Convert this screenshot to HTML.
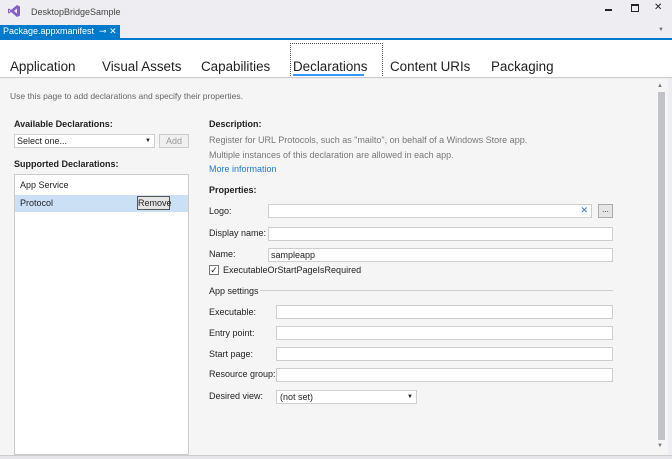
<!DOCTYPE html>
<html><head><style>
*{margin:0;padding:0;box-sizing:border-box}
body{width:672px;height:459px;overflow:hidden;background:#eeeef2;font-family:"Segoe UI","Liberation Sans",sans-serif;font-size:9px;color:#1e1e1e;position:relative}
.a{position:absolute;white-space:nowrap}
.in{position:absolute;background:#fff;border:1px solid #ccced2;height:14px}
.lb{position:absolute;font-size:9px;color:#1e1e1e}
.b{font-weight:bold}
.tab{position:absolute;top:59px;font-size:13.4px;color:#1e1e1e}
</style></head><body>
<svg class="a" style="left:7px;top:4px" width="14" height="14" viewBox="0 0 14 14"><path d="M10 1 L13 2.5 V11.5 L10 13 L4 8 L2 9.5 L1 9 V5 L2 4.5 L4 6 Z" fill="#865fc5"/><path d="M10 4.5 V9.5 L7 7 Z M2 5.8 V8.2 L3.3 7Z" fill="#eeeef2"/></svg>
<div class="a" style="left:31px;top:7px;font-size:9px;color:#444">DesktopBridgeSample</div>
<div class="a" style="left:605px;top:9px;width:7px;height:2px;background:#222"></div>
<div class="a" style="left:631px;top:4px;width:8px;height:8px;border:1px solid #222;border-top-width:2px"></div>
<div class="a" style="left:654px;top:2px;font-size:10px">✕</div>
<div class="a" style="left:0;top:25px;width:120px;height:14px;background:#007acc;color:#fff;font-size:9px;padding:1px 0 0 3px">Package.appxmanifest &nbsp;⊸ ✕</div>
<div class="a" style="left:658px;top:27px;font-size:6px;color:#777">▼</div>
<div class="a" style="left:0;top:38px;width:672px;height:2px;background:#007acc"></div>
<div class="a" style="left:0;top:40px;width:672px;height:38px;background:#fff;border-bottom:1px solid #ccc"></div>
<div class="a" style="left:290px;top:43px;width:93px;border:1px dotted #555;border-bottom:none;height:33px"></div>
<div class="tab" style="left:10px">Application</div>
<div class="tab" style="left:102px">Visual Assets</div>
<div class="tab" style="left:201px">Capabilities</div>
<div class="tab" style="left:293px">Declarations</div>
<div class="tab" style="left:390px">Content URIs</div>
<div class="tab" style="left:491px">Packaging</div>
<div class="a" style="left:293px;top:74px;width:71px;height:2px;background:#3399ff"></div>
<div class="a" style="left:0;top:79px;width:668px;height:376px;background:#f5f5f5"></div>
<div class="a" style="left:0;top:455px;width:672px;height:4px;background:#e5e5ea;border-top:1px solid #ccc"></div>
<div class="a" style="left:657px;top:83px;font-size:6px;color:#777">▲</div>
<div class="a" style="left:658px;top:92px;width:7px;height:348px;background:#c2c3c9"></div>
<div class="a" style="left:657px;top:443px;font-size:6px;color:#777">▼</div>
<div class="a" style="left:10px;top:91px;font-size:8.5px;color:#666">Use this page to add declarations and specify their properties.</div>
<div class="lb b" style="left:14px;top:119px">Available Declarations:</div>
<div class="in" style="left:14px;top:134px;width:141px;padding-left:2px;line-height:12px">Select one...<span style="position:absolute;right:3px;font-size:6px">▼</span></div>
<div class="a" style="left:159px;top:134px;width:30px;height:14px;border:1px solid #ccc;background:#f0f0f0;color:#999;text-align:center;line-height:12px">Add</div>
<div class="lb b" style="left:14px;top:159px">Supported Declarations:</div>
<div class="a" style="left:14px;top:174px;width:175px;height:281px;background:#fff;border:1px solid #ccc"></div>
<div class="lb" style="left:20px;top:180px">App Service</div>
<div class="a" style="left:15px;top:195px;width:173px;height:17px;background:#cce0f5"></div>
<div class="lb" style="left:20px;top:198px">Protocol</div>
<div class="a" style="left:137px;top:196px;width:33px;height:14px;border:1px solid #555;background:#e5e5e5;text-align:center;line-height:12px">Remove</div>
<div class="lb b" style="left:209px;top:119px">Description:</div>
<div class="lb" style="left:209px;top:135px;color:#777">Register for URL Protocols, such as "mailto", on behalf of a Windows Store app.</div>
<div class="lb" style="left:209px;top:150px;color:#777">Multiple instances of this declaration are allowed in each app.</div>
<div class="lb" style="left:209px;top:164px;color:#1e7ad6">More information</div>
<div class="lb b" style="left:209px;top:185px">Properties:</div>
<div class="lb" style="left:209px;top:206px">Logo:</div>
<div class="in" style="left:268px;top:204px;width:324px"><span style="position:absolute;right:3px;top:0;color:#1e7ad6;font-size:9px">✕</span></div>
<div class="a" style="left:598px;top:204px;width:15px;height:14px;border:1px solid #aaa;background:#e5e5e5;text-align:center;line-height:9px;font-size:8px">...</div>
<div class="lb" style="left:209px;top:228px">Display name:</div>
<div class="in" style="left:268px;top:227px;width:345px"></div>
<div class="lb" style="left:209px;top:249px">Name:</div>
<div class="in" style="left:268px;top:248px;width:345px;padding-left:2px;line-height:12px">sampleapp</div>
<div class="a" style="left:209px;top:265px;width:10px;height:10px;border:1px solid #777;background:#fff;font-size:9px;line-height:8px;text-align:center">✓</div>
<div class="lb" style="left:223px;top:265px">ExecutableOrStartPageIsRequired</div>
<div class="lb" style="left:209px;top:286px">App settings</div>
<div class="a" style="left:260px;top:290px;width:353px;height:1px;background:#ccc"></div>
<div class="lb" style="left:209px;top:307px">Executable:</div>
<div class="in" style="left:276px;top:305px;width:337px"></div>
<div class="lb" style="left:209px;top:328px">Entry point:</div>
<div class="in" style="left:276px;top:326px;width:337px"></div>
<div class="lb" style="left:209px;top:349px">Start page:</div>
<div class="in" style="left:276px;top:347px;width:337px"></div>
<div class="lb" style="left:209px;top:369px">Resource group:</div>
<div class="in" style="left:276px;top:368px;width:337px"></div>
<div class="lb" style="left:209px;top:391px">Desired view:</div>
<div class="in" style="left:276px;top:390px;width:141px;padding-left:3px;line-height:12px">(not set)<span style="position:absolute;right:3px;font-size:6px">▼</span></div>
</body></html>
